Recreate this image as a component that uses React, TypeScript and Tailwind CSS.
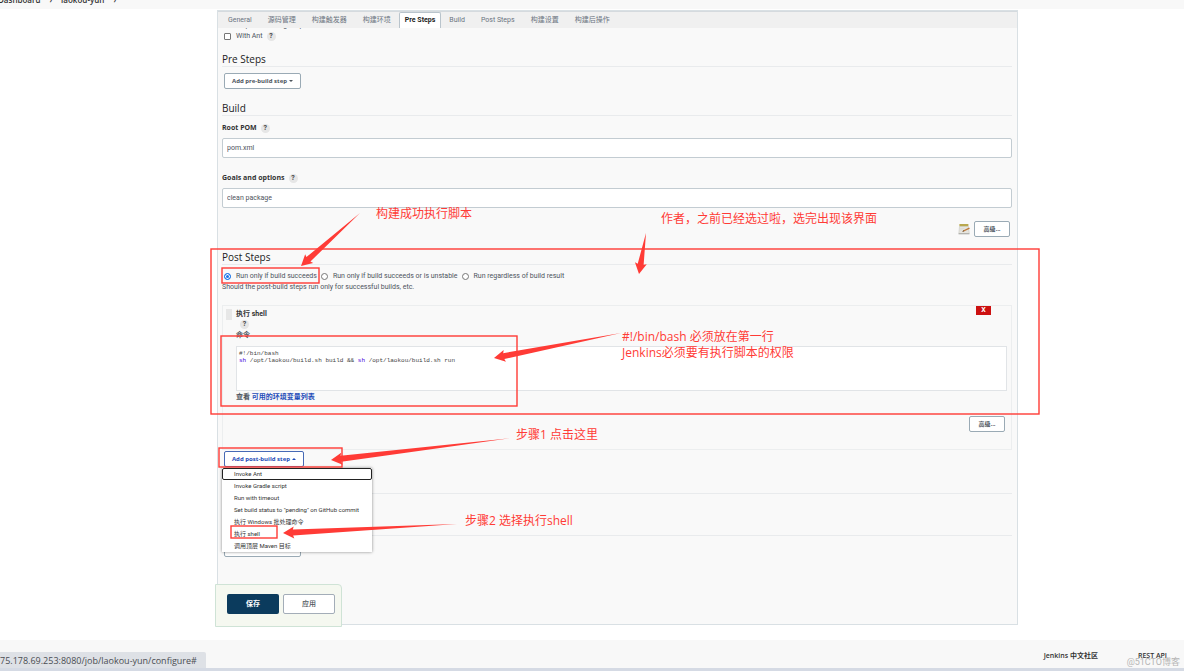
import { useState } from "react";
import type { ReactNode } from "react";

const tabs = ["General", "源码管理", "构建触发器", "构建环境", "Pre Steps", "Build", "Post Steps", "构建设置", "构建后操作"];

const runModes = [
  "Run only if build succeeds",
  "Run only if build succeeds or is unstable",
  "Run regardless of build result",
];

const stepMenu = [
  "Invoke Ant",
  "Invoke Gradle script",
  "Run with timeout",
  'Set build status to "pending" on GitHub commit',
  "执行 Windows 批处理命令",
  "执行 shell",
  "调用顶层 Maven 目标",
];

const boxes = [
  { x: 211, y: 249, w: 828, h: 165 },
  { x: 222, y: 268, w: 97, h: 15 },
  { x: 221, y: 336, w: 296, h: 70 },
  { x: 219, y: 448, w: 123, h: 19 },
  { x: 231, y: 526, w: 46, h: 12 },
];

// from = thin tail, to = tip
const arrows = [
  { from: [360, 213], to: [301, 266] },
  { from: [646, 233], to: [639, 274] },
  { from: [621, 333], to: [494, 358] },
  { from: [512, 438], to: [331, 460] },
  { from: [457, 524], to: [283, 533] },
];

function arrowPoints(from: number[], to: number[]) {
  const len = Math.hypot(to[0] - from[0], to[1] - from[1]);
  const ux = (to[0] - from[0]) / len;
  const uy = (to[1] - from[1]) / len;
  const at = (back: number, side: number) =>
    `${to[0] - ux * back - uy * side},${to[1] - uy * back + ux * side}`;
  return [at(len, 0), at(10, 3), at(11, 6), at(0, 0), at(11, -6), at(10, -3)].join(" ");
}

function Help() {
  return (
    <button
      aria-label="Help"
      className="flex size-[9px] items-center justify-center rounded-full bg-[#e6e6e6] text-[7px] font-bold leading-none text-[#444]"
    >
      ?
    </button>
  );
}

function SectionTitle({ children }: { children: ReactNode }) {
  return (
    <h2 className="h-4 border-b border-[#e9ebed] font-['Open_Sans',sans-serif] text-[10px] font-medium leading-4 text-[#222]">
      {children}
    </h2>
  );
}

function OutlineButton({ children, className = "" }: { children: ReactNode; className?: string }) {
  return (
    <button
      className={`flex h-4 items-center justify-center gap-[2px] rounded-[2px] border bg-white font-['Open_Sans','Noto_Sans_CJK_SC',sans-serif] text-[6px] font-bold ${className}`}
    >
      {children}
    </button>
  );
}

function Field({ id, label, value }: { id: string; label: string; value: string }) {
  return (
    <div>
      <div className="flex h-3 items-center gap-1">
        <label htmlFor={id} className="font-['Open_Sans',sans-serif] font-bold text-[#333]">
          {label}
        </label>
        <Help />
      </div>
      <input
        id={id}
        defaultValue={value}
        className="mt-1 block h-5 w-full rounded-[2px] border border-[#c3ccd2] bg-white px-1 text-[7px] text-[#4d545d]"
      />
    </div>
  );
}

function NotepadIcon() {
  return (
    <svg viewBox="0 0 12 12" className="size-3" aria-hidden="true">
      <path d="M1.5 3.5h9l.8 7H.8z" fill="#e6e5df" stroke="#c0c0ba" strokeWidth=".5" />
      <path d="M.6 10.3h10.8v1H.6z" fill="#a5a5a0" />
      <path d="M1.4 1h9v2.2h-9z" fill="#b9a84e" />
      <path d="M2.3 5.5h4M2.1 7h2.5" stroke="#cfcfc8" strokeWidth=".4" />
      <path d="m4.3 8.8 1.2-1.6 5.6-2.6.7 1.2-5.5 2.5z" fill="#c07a3a" />
      <path d="m4.3 8.8 1.2-1.6.8 1.1z" fill="#4e3f30" />
    </svg>
  );
}

function ShellEditor() {
  const [code, setCode] = useState(
    "#!/bin/bash\nsh /opt/laokou/build.sh build && sh /opt/laokou/build.sh run",
  );
  return (
    <div className="relative h-[45px] border border-[#e1e4e7] bg-white font-['Liberation_Mono',monospace] text-[6px] leading-[7px]">
      <pre aria-hidden="true" className="px-[2px] py-[3px] font-[inherit] text-[#444]">
        {code.split(/(^sh| sh )/m).map((part, i) => (
          <span key={i} className={part.trim() === "sh" ? "text-[#4400dd]" : ""}>
            {part}
          </span>
        ))}
      </pre>
      <textarea
        id="command"
        value={code}
        spellCheck={false}
        onChange={(e) => setCode(e.target.value)}
        className="absolute inset-0 resize-none bg-transparent px-[2px] py-[3px] text-transparent caret-black outline-none"
      />
    </div>
  );
}

function Note({ className, children }: { className: string; children: ReactNode }) {
  return (
    <p className={`absolute whitespace-nowrap text-[12px] leading-4 text-[#ff3b36] ${className}`}>{children}</p>
  );
}

export default function App() {
  const [mode, setMode] = useState(0);

  return (
    <div className="relative flex min-h-screen flex-col overflow-hidden bg-white font-['Roboto','Noto_Sans_CJK_SC',sans-serif] text-[7px] leading-[10px] text-[#4d545d]">
      {/* Breadcrumbs */}
      <nav className="flex h-[9px] items-end gap-[9px] bg-[#f8f8f8] pb-1 font-['Open_Sans',sans-serif] text-[8px] font-semibold leading-[10px] text-[#333]">
        <a href="#" className="-ml-[2px]">Dashboard</a>
        <span>›</span>
        <a href="#">laokou-yun</a>
        <span>›</span>
      </nav>

      {/* Config form */}
      <main className="mt-px mr-[166px] ml-[217px] flex h-[615px] flex-col border border-[#d9e0e4] bg-[#f9f9f9]">
        <div className="flex h-[17px] shrink-0 items-stretch border-t border-[#d5dade] bg-[#f0f0f0] pl-[2px]">
          {tabs.map((tab) => (
            <button
              key={tab}
              className={
                tab === "Pre Steps"
                  ? "rounded-t-[2px] border border-b-0 border-[#b9c4cc] bg-white px-[5px] pb-px text-[7px] font-bold text-[#222]"
                  : "px-2 text-[7px] text-[#6b7480]"
              }
            >
              {tab}
            </button>
          ))}
        </div>

        <div className="pr-[5px] pl-1">
          <div className="flex h-[2px] items-end overflow-hidden pl-[14px]">
            <span className="whitespace-nowrap">Inspect build log for published Gradle build scans</span>
          </div>
          <div className="flex h-3 items-center pl-[2px]">
            <input
              id="with-ant"
              type="checkbox"
              className="size-[7px] appearance-none rounded-[1px] border border-[#767676] bg-white checked:bg-[#1a73e8]"
            />
            <label htmlFor="with-ant" className="mr-1 ml-[5px]">
              With Ant
            </label>
            <Help />
          </div>

          <div className="mt-[9px]">
            <SectionTitle>Pre Steps</SectionTitle>
            <div className="mt-[6px] ml-[2px] flex">
              <OutlineButton className="w-[77px] border-[#9aaab5] text-[#4d545d]">
                Add pre-build step
                <span className="border-x-2 border-t-2 border-x-transparent border-t-current" />
              </OutlineButton>
            </div>
          </div>

          <div className="mt-[11px]">
            <SectionTitle>Build</SectionTitle>
            <div className="mt-[6px] flex flex-col gap-[14px]">
              <Field id="pom" label="Root POM" value="pom.xml" />
              <Field id="goals" label="Goals and options" value="clean package" />
            </div>
            <div className="mt-[13px] mr-[2px] flex items-center justify-end gap-1">
              <NotepadIcon />
              <OutlineButton className="w-9 border-[#9aaab5] text-[#4d545d]">高级...</OutlineButton>
            </div>
          </div>

          <div className="mt-3">
            <SectionTitle>Post Steps</SectionTitle>
            <fieldset className="mt-[5px] flex h-3 items-center pl-[2px]">
              {runModes.map((label, i) => (
                <label key={label} className="mr-1 flex items-center gap-[5px]">
                  <input
                    type="radio"
                    name="run-mode"
                    checked={mode === i}
                    onChange={() => setMode(i)}
                    className="size-[7px] appearance-none rounded-full border border-[#767676] bg-white checked:border-[#1a73e8] checked:bg-[#1a73e8] checked:shadow-[inset_0_0_0_1px_#fff]"
                  />
                  {label}
                </label>
              ))}
            </fieldset>
            <p>Should the post-build steps run only for successful builds, etc.</p>

            <section className="mt-[13px] h-[145px] border border-[#eceeef] pr-[4px] pl-[3px]">
              <div className="flex justify-between">
                <div className="flex items-start gap-1 pt-[3px]">
                  <span className="h-[11px] w-[6px] bg-[#e7e7e7]" />
                  <h3 className="font-bold text-[#333]">执行 shell</h3>
                </div>
                <button className="mr-4 h-[9px] w-[15px] bg-[#cc1111] text-[7px] font-bold leading-[9px] text-white">
                  X
                </button>
              </div>
              <div className="pl-[10px]">
                <div className="ml-1 flex h-[9px]">
                  <Help />
                </div>
                <label htmlFor="command" className="mt-[1px] mb-[6px] block font-bold">
                  命令
                </label>
                <ShellEditor />
                <p className="mt-px font-bold">
                  查看{" "}
                  <a href="#" className="text-[#1d4bb8]">
                    可用的环境变量列表
                  </a>
                </p>
              </div>
              <div className="mt-[14px] mr-[2px] flex justify-end">
                <OutlineButton className="w-9 border-[#9aaab5] text-[#4d545d]">高级...</OutlineButton>
              </div>
            </section>

            <div className="relative mt-px ml-[2px] flex">
              <OutlineButton className="w-20 border-[#4669b5] text-[#1d4bb8]">
                Add post-build step
                <span className="border-x-2 border-b-2 border-x-transparent border-b-current" />
              </OutlineButton>
              <ul className="absolute top-[17px] -left-[2px] z-10 w-[150px] bg-white text-[6px] text-[#333] shadow-[0_0_3px_rgba(0,0,0,0.45)]">
                {stepMenu.map((item, i) => (
                  <li key={item}>
                    <button
                      className={`block h-3 w-full rounded-[2px] pl-3 text-left leading-3 ${
                        i === 0 ? "outline outline-[#222] -outline-offset-1" : ""
                      }`}
                    >
                      {item}
                    </button>
                  </li>
                ))}
              </ul>
            </div>
          </div>

          <hr className="mt-[26px] border-[#e9ebed]" />
          <hr className="mt-[41px] border-[#e9ebed]" />
          <button
            aria-label="Add post-build action"
            className="mt-[5px] ml-[2px] block h-4 w-[77px] rounded-[2px] border border-[#9aaab5] bg-white"
          />
        </div>

        {/* Save bar */}
        <div className="mt-auto -mb-[3px] -ml-[3px] flex h-[43px] w-[127px] gap-1 rounded-tr-[4px] border border-[#cfe3d6] bg-[#f5f8f0] pt-[9px] pl-[11px]">
          <button className="h-5 w-[52px] rounded-[2px] bg-[#0b3b5d] text-[7px] font-bold text-white">保存</button>
          <button className="h-5 w-[52px] rounded-[2px] border border-[#a3adb8] bg-white text-[7px] font-medium">应用</button>
        </div>
      </main>

      <footer className="mt-auto flex h-[31px] items-center justify-end gap-10 border-b-[3px] border-[#d5dae4] bg-[#f8f8f8] pt-[3px] pr-[17px] font-['Open_Sans','Noto_Sans_CJK_SC',sans-serif] font-semibold text-[#333]">
        <a href="#">Jenkins 中文社区</a>
        <a href="#">REST API</a>
      </footer>

      {/* Link preview of the browser */}
      <div className="absolute bottom-[3px] left-0 h-4 w-[206px] rounded-tr-[2px] bg-[#dee1e6] font-['Open_Sans',sans-serif] text-[9px] leading-[17px] whitespace-nowrap text-[#4a4d52]">
        75.178.69.253:8080/job/laokou-yun/configure#
      </div>
      <span className="absolute right-1 bottom-1 text-[9px] text-[#b5b5b5]">@51CTO博客</span>

      {/* Red notes */}
      <div className="pointer-events-none absolute inset-0 z-20 font-['Open_Sans','Noto_Sans_CJK_SC',sans-serif]">
        <svg className="size-full" fill="none" aria-hidden="true">
          {boxes.map((b) => (
            <rect key={b.y} x={b.x} y={b.y} width={b.w} height={b.h} stroke="#ff3b36" strokeWidth="1.4" />
          ))}
          {arrows.map((a) => (
            <polygon key={a.to[1]} points={arrowPoints(a.from, a.to)} fill="#ff3b36" />
          ))}
        </svg>
        <Note className="top-[206px] left-[376px]">构建成功执行脚本</Note>
        <Note className="top-[211px] left-[661px]">作者，之前已经选过啦，选完出现该界面</Note>
        <Note className="top-[329px] left-[622px]">
          #!/bin/bash 必须放在第一行
          <br />
          Jenkins必须要有执行脚本的权限
        </Note>
        <Note className="top-[427px] left-[516px]">步骤1 点击这里</Note>
        <Note className="top-[513px] left-[465px]">步骤2 选择执行shell</Note>
      </div>
    </div>
  );
}
